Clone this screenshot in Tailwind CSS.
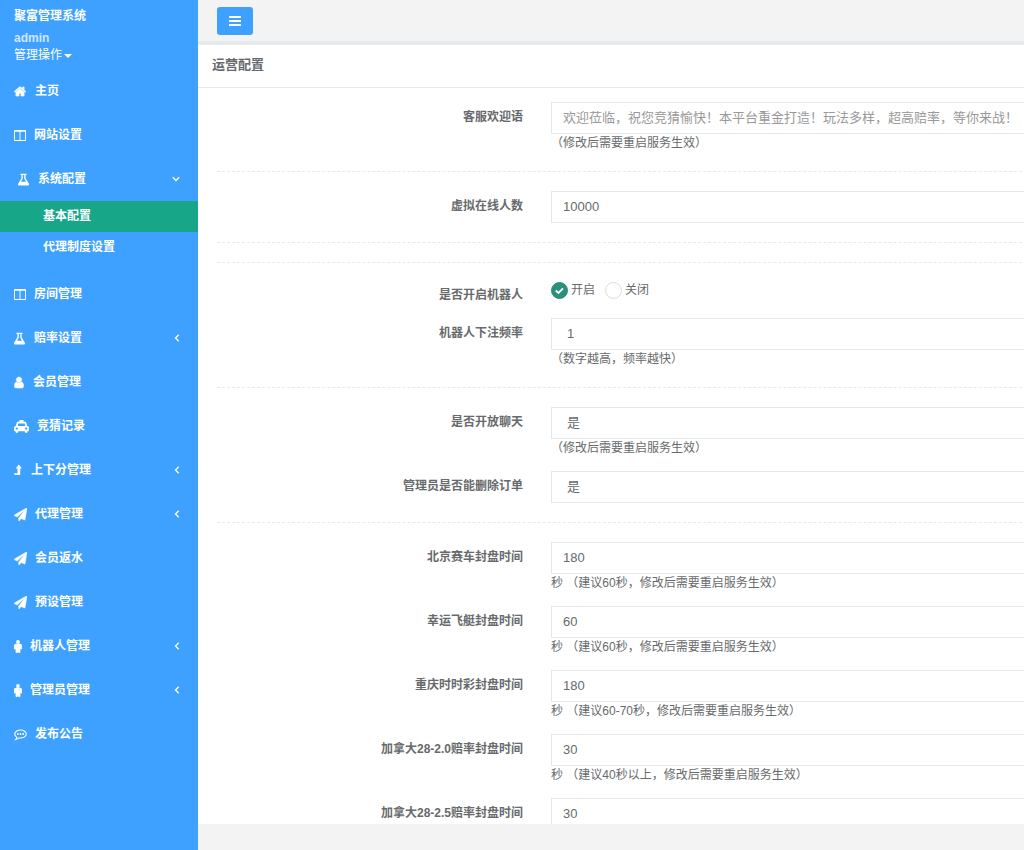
<!DOCTYPE html>
<html lang="zh-CN">
<head>
  <meta charset="UTF-8" />
  <title>聚富管理系统</title>
  <meta name="viewport" content="width=device-width, initial-scale=1" />
  <script src="https://cdn.jsdelivr.net/npm/@tailwindcss/browser@4"></script>
</head>
<body class="flex h-screen overflow-hidden bg-[#f3f3f4] font-['Liberation_Sans','Noto_Sans_CJK_SC',sans-serif] text-[12px] text-[#676a6c]">

  <!-- Icon shapes -->
  <svg class="hidden">
    <symbol id="i-home" viewBox="64 0 1664 1792"><path stroke="currentColor" stroke-width="70" d="M1472 992v480q0 26-19 45t-45 19h-384v-384h-256v384h-384q-26 0-45-19t-19-45v-480q0-1 .5-3t.5-3l575-474 575 474q1 2 1 6zm223-69l-62 74q-8 9-21 11h-3q-13 0-21-7l-692-577-692 577q-12 8-24 7-13-2-21-11l-62-74q-8-10-7-23.5t11-21.5l719-599q32-26 76-26t76 26l244 204v-195q0-14 9-23t23-9h192q14 0 23 9t9 23v408l219 182q10 8 11 21.5t-7 23.5z"/></symbol>
    <symbol id="i-columns" viewBox="64 0 1664 1792"><path d="M224 1536h608v-1152h-640v1120q0 13 9.5 22.5t22.5 9.5zm1376-32v-1120h-640v1152h608q13 0 22.5-9.5t9.5-22.5zm128-1216v1216q0 66-47 113t-113 47h-1344q-66 0-113-47t-47-113v-1216q0-66 47-113t113-47h1344q66 0 113 47t47 113z"/></symbol>
    <symbol id="i-flask" viewBox="0 0 11 13"><path fill-rule="evenodd" d="M2.500.8h6v1.300h-.9v3.100l3.300 5.500q.7 1.500-.8 1.700H.9q-1.500-.2-.8-1.700l3.300-5.500V2.100h-.9zM4.800 2.100v3.500L3.100 8.700h4.800L6.200 5.600V2.100z"/></symbol>
    <symbol id="i-user" viewBox="256 0 1280 1792"><path stroke="currentColor" stroke-width="60" d="M1536 1399q0 109-62.5 187t-150.5 78h-854q-88 0-150.5-78t-62.5-187q0-85 8.5-160.5t31.5-152 58.5-131 94-89 134.5-34.5q131 128 313 128t313-128q76 0 134.5 34.5t94 89 58.5 131 31.5 152 8.5 160.500zm-256-887q0 159-112.5 271.5t-271.5 112.5-271.5-112.5-112.5-271.5 112.5-271.5 271.5-112.5 271.5 112.5 112.5 271.5z"/></symbol>
    <symbol id="i-plane" viewBox="0 0 1792 1792"><path stroke="currentColor" stroke-width="50" d="M1764 11q33 24 27 64l-256 1536q-5 29-32 45-14 8-31 8-11 0-24-5l-453-185-242 295q-18 23-49 23-13 0-22-4-19-7-30.5-23.5t-11.5-36.5v-349l864-1059-1069 925-395-162q-37-14-40-55-2-40 32-59l1664-960q15-9 32-9 20 0 36 11z"/></symbol>
    <symbol id="i-taxi" viewBox="0 0 16 14"><path fill-rule="evenodd" d="M6.200 0h3.600l.5.5v1.300h1.200c.9 0 1.500.5 1.700 1.300l.9 3.400h.3c.9 0 1.600.8 1.600 1.700v3.300l-.5.5H14.500v.5a1.500 1.500 0 0 1-3 0V12h-7v.5a1.500 1.500 0 0 1-3 0V12H.5l-.5-.5V8.200c0-.9.7-1.700 1.600-1.700h.3l.9-3.400c.2-.8.8-1.300 1.700-1.300h1.200V.5zM4.600 3.800l-.7 2.700h8.200l-.7-2.700zM3 8a1.200 1.200 0 1 0 0 2.400A1.200 1.200 0 0 0 3 8zm10 0a1.200 1.200 0 1 0 0 2.400A1.200 1.200 0 0 0 13 8z"/></symbol>
    <symbol id="i-up" viewBox="0 0 8 12"><path d="M4.800.6L8 4.600H6.200V10.500L5.700 11H.5L0 9.300H3.500V4.600H1.600z"/></symbol>
    <symbol id="i-male" viewBox="0 0 8 13"><circle cx="4" cy="2" r="1.900"/><path d="M2 3.700h4Q8 3.700 8 5.500v3.100q0 .8-.8.8t-.8-.6v3.100q0 1-1.100 1T4 12.200q-.2.7-1.300.7t-1.100-1V8.800q0 .6-.8.600T0 8.600V5.500Q0 3.700 2 3.700z"/></symbol>
    <symbol id="i-comment" viewBox="0 0 14 13"><path d="M7 1.700c3.400 0 6.200 1.900 6.200 4.300S10.400 10.300 7 10.300q-.8 0-1.500-.1Q4 11.500 2 11.900q.9-.9 1.100-2.300Q.8 8.300.8 6C.8 3.600 3.600 1.700 7 1.700z" fill="none" stroke="currentColor" stroke-width="1.200"/><circle cx="4.200" cy="6" r="1"/><circle cx="7" cy="6" r="1"/><circle cx="9.800" cy="6" r="1"/></symbol>
    <symbol id="i-left" viewBox="0 0 6 8"><path d="M4.700.8L1.500 4l3.200 3.200" fill="none" stroke="currentColor" stroke-width="1.300"/></symbol>
    <symbol id="i-down" viewBox="0 0 8 6"><path d="M.8 1.300L4 4.500l3.200-3.200" fill="none" stroke="currentColor" stroke-width="1.300"/></symbol>
  </svg>

  <!-- Sidebar -->
  <aside class="w-[198px] shrink-0 bg-[#3ea1ff] text-white">
    <header class="px-3.5 pt-2 pb-1">
      <h1 class="font-bold leading-4">聚富管理系统</h1>
      <p class="mt-1.5 font-bold leading-4 text-white/75">admin</p>
      <button type="button" class="flex items-center leading-[18px]">管理操作<span class="ml-0.5 mt-0.5 border-x-4 border-t-4 border-x-transparent border-t-white"></span></button>
    </header>
    <nav class="pt-px font-bold">
      <a href="#" class="flex h-11 items-center gap-[9px] px-3.5"><svg class="h-[13px] w-3" fill="currentColor"><use href="#i-home"/></svg>主页</a>
      <a href="#" class="flex h-11 items-center gap-2 px-3.5"><svg class="h-[13px] w-3" fill="currentColor"><use href="#i-columns"/></svg>网站设置</a>
      <a href="#" class="flex h-11 items-center gap-[9px] px-[18px]"><svg class="h-[13px] w-[11px]" fill="currentColor"><use href="#i-flask"/></svg>系统配置<svg class="ml-auto h-1.5 w-2"><use href="#i-down"/></svg></a>
      <div class="mb-[9px]">
        <a href="#" class="flex h-[31px] items-center bg-[#18a689] pb-0.5 pl-[43px]">基本配置</a>
        <a href="#" class="flex h-[31px] items-center pb-0.5 pl-[43px]">代理制度设置</a>
      </div>
      <a href="#" class="flex h-11 items-center gap-2 px-3.5"><svg class="h-[13px] w-3" fill="currentColor"><use href="#i-columns"/></svg>房间管理</a>
      <a href="#" class="flex h-11 items-center gap-[9px] pl-3.5 pr-[18px]"><svg class="h-[13px] w-[11px]" fill="currentColor"><use href="#i-flask"/></svg>赔率设置<svg class="ml-auto h-2 w-1.5"><use href="#i-left"/></svg></a>
      <a href="#" class="flex h-11 items-center gap-[9px] px-3.5"><svg class="h-[13px] w-[10px]" fill="currentColor"><use href="#i-user"/></svg>会员管理</a>
      <a href="#" class="flex h-11 items-center gap-2 px-3.5"><svg class="h-[13px] w-[15px]" fill="currentColor"><use href="#i-taxi"/></svg>竞猜记录</a>
      <a href="#" class="flex h-11 items-center gap-[9px] pl-3.5 pr-[18px]"><svg class="h-3 w-2" fill="currentColor"><use href="#i-up"/></svg>上下分管理<svg class="ml-auto h-2 w-1.5"><use href="#i-left"/></svg></a>
      <a href="#" class="flex h-11 items-center gap-2 pl-3.5 pr-[18px]"><svg class="h-[13px] w-[13px]" fill="currentColor"><use href="#i-plane"/></svg>代理管理<svg class="ml-auto h-2 w-1.5"><use href="#i-left"/></svg></a>
      <a href="#" class="flex h-11 items-center gap-2 px-3.5"><svg class="h-[13px] w-[13px]" fill="currentColor"><use href="#i-plane"/></svg>会员返水</a>
      <a href="#" class="flex h-11 items-center gap-2 px-3.5"><svg class="h-[13px] w-[13px]" fill="currentColor"><use href="#i-plane"/></svg>预设管理</a>
      <a href="#" class="flex h-11 items-center gap-2 pl-3.5 pr-[18px]"><svg class="h-[13px] w-2" fill="currentColor"><use href="#i-male"/></svg>机器人管理<svg class="ml-auto h-2 w-1.5"><use href="#i-left"/></svg></a>
      <a href="#" class="flex h-11 items-center gap-2 pl-3.5 pr-[18px]"><svg class="h-[13px] w-2" fill="currentColor"><use href="#i-male"/></svg>管理员管理<svg class="ml-auto h-2 w-1.5"><use href="#i-left"/></svg></a>
      <a href="#" class="flex h-11 items-center gap-2 px-3.5"><svg class="h-[13px] w-[13px]" fill="currentColor"><use href="#i-comment"/></svg>发布公告</a>
    </nav>
  </aside>

  <!-- Main Content -->
  <div class="flex min-w-0 flex-1 flex-col">
    <div class="px-[19px] pt-[7px] pb-1.5">
      <button type="button" aria-label="菜单" class="flex h-7 w-9 items-center justify-center rounded-[3px] bg-[#3ea1ff] text-white">
        <svg class="h-[10px] w-3" viewBox="0 0 12 10" fill="currentColor"><rect width="12" height="2" rx=".5"/><rect y="4" width="12" height="2" rx=".5"/><rect y="8" width="12" height="2" rx=".5"/></svg>
      </button>
    </div>

    <main class="flex min-h-0 flex-1 flex-col border-t-4 border-[#e7eaec] bg-white">
      <h2 class="border-b border-[#e7eaec] px-3.5 pt-2.5 pb-3 text-[13px] font-bold leading-5">运营配置</h2>

      <form class="min-h-0 flex-1 overflow-hidden pl-[19px] pt-3.5">
        <div class="min-w-[860px]">
          <div class="mb-3.5 grid grid-cols-[306px_1fr] gap-x-7">
            <label for="welcome" class="pt-1.5 text-right font-bold leading-[18px]">客服欢迎语</label>
            <div>
              <input id="welcome" type="text" placeholder="欢迎莅临，祝您竞猜愉快！本平台重金打造！玩法多样，超高赔率，等你来战！" class="block h-8 w-full border border-[#e5e6e7] px-[11px] pb-0.5 text-[13px] placeholder:text-[#999]" />
              <p class="leading-[18px]">（修改后需要重启服务生效）</p>
            </div>
          </div>
          <hr class="my-[19px] border-dashed border-[#e7eaec]" />
          <div class="mb-3.5 grid grid-cols-[306px_1fr] gap-x-7">
            <label for="online" class="pt-1.5 text-right font-bold leading-[18px]">虚拟在线人数</label>
            <input id="online" type="text" value="10000" class="block h-8 w-full border border-[#e5e6e7] px-[11px] pb-0.5 text-[13px]" />
          </div>
          <hr class="my-[19px] border-dashed border-[#e7eaec]" />
          <hr class="my-[19px] border-dashed border-[#e7eaec]" />

          <div class="mb-3.5 grid h-[22px] grid-cols-[306px_1fr] gap-x-7" role="radiogroup" aria-labelledby="robot">
            <span id="robot" class="pt-1 text-right font-bold leading-[18px]">是否开启机器人</span>
            <div class="flex h-4 items-center gap-2.5">
              <label class="flex items-center gap-[3px]">
                <span class="grid">
                  <input type="radio" name="robot" checked class="col-start-1 row-start-1 size-[17px] appearance-none rounded-full border border-[#ddd] checked:border-[#2b8f7b] checked:bg-[#2b8f7b]" />
                  <svg class="pointer-events-none col-start-1 row-start-1 size-[17px]" viewBox="0 0 17 17" fill="none" stroke="#fff" stroke-width="1.800"><path d="M4.800 8.500l2.600 2.500 4.600-4.600"/></svg>
                </span>开启
              </label>
              <label class="flex items-center gap-[3px]"><input type="radio" name="robot" class="size-[17px] appearance-none rounded-full border border-[#ddd] checked:bg-[#2b8f7b]" />关闭</label>
            </div>
          </div>
          <div class="mb-3.5 grid grid-cols-[306px_1fr] gap-x-7">
            <label for="rate" class="pt-1.5 text-right font-bold leading-[18px]">机器人下注频率</label>
            <div>
              <select id="rate" class="block h-8 w-full appearance-none border border-[#e5e6e7] px-[15px] text-[13px]"><option>1</option></select>
              <p class="leading-[18px]">（数字越高，频率越快）</p>
            </div>
          </div>
          <hr class="my-[19px] border-dashed border-[#e7eaec]" />

          <div class="mb-3.5 grid grid-cols-[306px_1fr] gap-x-7">
            <label for="chat" class="pt-1.5 text-right font-bold leading-[18px]">是否开放聊天</label>
            <div>
              <select id="chat" class="block h-8 w-full appearance-none border border-[#e5e6e7] px-[15px] text-[13px]"><option>是</option><option>否</option></select>
              <p class="leading-[18px]">（修改后需要重启服务生效）</p>
            </div>
          </div>
          <div class="mb-3.5 grid grid-cols-[306px_1fr] gap-x-7">
            <label for="del" class="pt-1.5 text-right font-bold leading-[18px]">管理员是否能删除订单</label>
            <select id="del" class="block h-8 w-full appearance-none border border-[#e5e6e7] px-[15px] text-[13px]"><option>是</option><option>否</option></select>
          </div>
          <hr class="my-[19px] border-dashed border-[#e7eaec]" />

          <!-- 封盘时间 -->
          <div class="mb-3.5 grid grid-cols-[306px_1fr] gap-x-7">
            <label for="bj" class="pt-1.5 text-right font-bold leading-[18px]">北京赛车封盘时间</label>
            <div>
              <input id="bj" type="text" value="180" class="block h-8 w-full border border-[#e5e6e7] px-[11px] pb-0.5 text-[13px]" />
              <p class="leading-[18px]">秒 （建议60秒，修改后需要重启服务生效）</p>
            </div>
          </div>
          <div class="mb-3.5 grid grid-cols-[306px_1fr] gap-x-7">
            <label for="ft" class="pt-1.5 text-right font-bold leading-[18px]">幸运飞艇封盘时间</label>
            <div>
              <input id="ft" type="text" value="60" class="block h-8 w-full border border-[#e5e6e7] px-[11px] pb-0.5 text-[13px]" />
              <p class="leading-[18px]">秒 （建议60秒，修改后需要重启服务生效）</p>
            </div>
          </div>
          <div class="mb-3.5 grid grid-cols-[306px_1fr] gap-x-7">
            <label for="cq" class="pt-1.5 text-right font-bold leading-[18px]">重庆时时彩封盘时间</label>
            <div>
              <input id="cq" type="text" value="180" class="block h-8 w-full border border-[#e5e6e7] px-[11px] pb-0.5 text-[13px]" />
              <p class="leading-[18px]">秒 （建议60-70秒，修改后需要重启服务生效）</p>
            </div>
          </div>
          <div class="mb-3.5 grid grid-cols-[306px_1fr] gap-x-7">
            <label for="jnd20" class="pt-1.5 text-right font-bold leading-[18px]">加拿大28-2.0赔率封盘时间</label>
            <div>
              <input id="jnd20" type="text" value="30" class="block h-8 w-full border border-[#e5e6e7] px-[11px] pb-0.5 text-[13px]" />
              <p class="leading-[18px]">秒 （建议40秒以上，修改后需要重启服务生效）</p>
            </div>
          </div>
          <div class="mb-3.5 grid grid-cols-[306px_1fr] gap-x-7">
            <label for="jnd25" class="pt-1.5 text-right font-bold leading-[18px]">加拿大28-2.5赔率封盘时间</label>
            <input id="jnd25" type="text" value="30" class="block h-8 w-full border border-[#e5e6e7] px-[11px] pb-0.5 text-[13px]" />
          </div>
        </div>
      </form>
    </main>

    <footer class="h-[26px] shrink-0"></footer>
  </div>
</body>
</html>
